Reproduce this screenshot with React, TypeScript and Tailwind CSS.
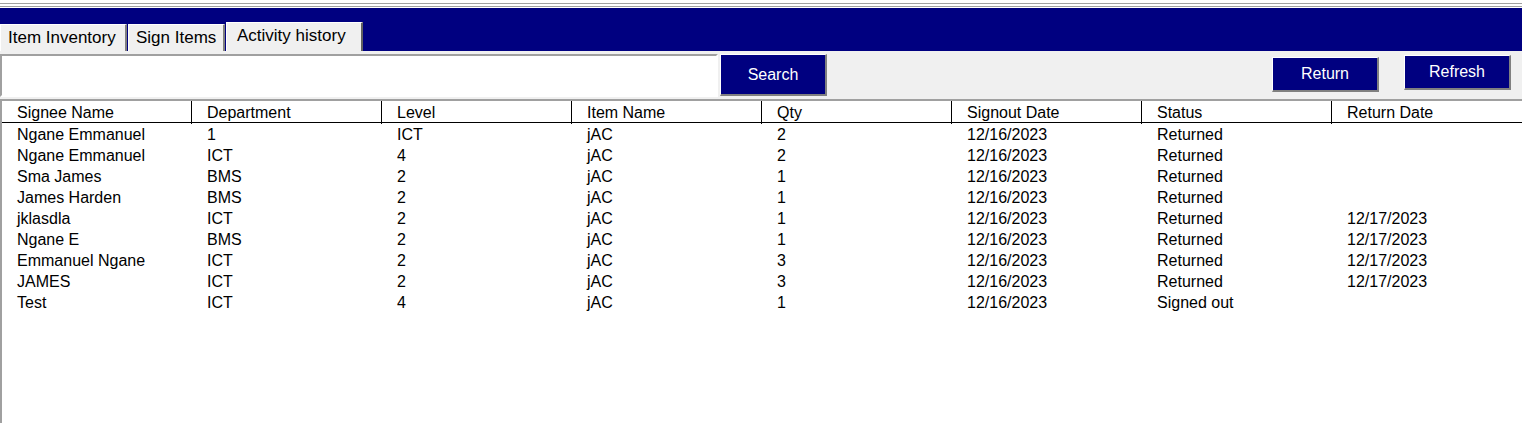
const columns = ['Signee Name', 'Department', 'Level', 'Item Name', 'Qty', 'Signout Date', 'Status', 'Return Date'];

const rows: string[][] = [
  ['Ngane Emmanuel', '1', 'ICT', 'jAC', '2', '12/16/2023', 'Returned', ''],
  ['Ngane Emmanuel', 'ICT', '4', 'jAC', '2', '12/16/2023', 'Returned', ''],
  ['Sma James', 'BMS', '2', 'jAC', '1', '12/16/2023', 'Returned', ''],
  ['James Harden', 'BMS', '2', 'jAC', '1', '12/16/2023', 'Returned', ''],
  ['jklasdla', 'ICT', '2', 'jAC', '1', '12/16/2023', 'Returned', '12/17/2023'],
  ['Ngane E', 'BMS', '2', 'jAC', '1', '12/16/2023', 'Returned', '12/17/2023'],
  ['Emmanuel Ngane', 'ICT', '2', 'jAC', '3', '12/16/2023', 'Returned', '12/17/2023'],
  ['JAMES', 'ICT', '2', 'jAC', '3', '12/16/2023', 'Returned', '12/17/2023'],
  ['Test', 'ICT', '4', 'jAC', '1', '12/16/2023', 'Signed out', ''],
];

function NavyButton({ label, className }: { label: string; className: string }) {
  return (
    <button
      className={`bg-[#000080] text-white text-[16px] border border-t-white border-l-white border-r-2 border-b-2 border-r-[#808080] border-b-[#808080] ${className}`}
    >
      {label}
    </button>
  );
}

export default function App() {
  return (
    <div className="w-[1522px] h-[423px] bg-white overflow-hidden flex flex-col text-black" style={{ fontFamily: '"Liberation Sans", Arial, sans-serif' }}>
      {/* window chrome lines */}
      <div className="h-[8px] flex flex-col">
        <div className="h-[3px]" />
        <div className="h-px bg-[#a0a0a0]" />
        <div className="h-[2px]" />
        <div className="h-px bg-[#a0a0a0]" />
        <div className="h-px" />
      </div>

      {/* tab strip */}
      <div className="h-[43px] bg-[#000080] flex items-end">
        <div className="h-[27px] w-[127px] bg-[#f0f0f0] border-t border-l border-white border-r-2 border-r-[#808080] pl-[7px] pt-[3px] text-[17px] leading-[20px]">
          Item Inventory
        </div>
        <div className="h-[27px] w-[97px] ml-px bg-[#f0f0f0] border-t border-l border-white border-r-2 border-r-[#808080] pl-[7px] pt-[3px] text-[17px] leading-[20px]">
          Sign Items
        </div>
        <div className="h-[30px] w-[137px] ml-px bg-[#f0f0f0] border-t border-l border-white border-r-2 border-r-[#606060] pl-[10px] pt-[3px] text-[17px] leading-[20px] -mb-px">
          Activity history
        </div>
      </div>

      {/* toolbar */}
      <div className="h-[48px] bg-[#f0f0f0] flex items-start pt-[3px]">
        <div className="w-[718px] h-[43px] bg-white border-2 border-[#a0a0a0] border-b-white border-r-white" />
        <NavyButton label="Search" className="ml-[2px] w-[107px] h-[42px]" />
        <div className="flex-1" />
        <NavyButton label="Return" className="mt-[3px] w-[107px] h-[35px]" />
        <NavyButton label="Refresh" className="ml-[25px] mt-[1px] w-[107px] h-[35px]" />
        <div className="w-[11px]" />
      </div>

      {/* table */}
      <div className="flex-1 bg-white border-t-2 border-l-2 border-[#a0a0a0]">
        <div className="grid grid-cols-[repeat(8,190px)] h-[22px] border-b border-black text-[16px]">
          {columns.map((c, i) => (
            <div key={c} className={`pl-[15px] leading-[23px] ${i > 0 ? 'border-l border-black -ml-px' : ''}`}>
              {c}
            </div>
          ))}
        </div>
        <div className="pt-px">
          {rows.map((r, idx) => (
            <div key={idx} className="grid grid-cols-[repeat(8,190px)] h-[21px] text-[16px] leading-[21px]">
              {r.map((v, i) => (
                <div key={i} className="pl-[15px]">
                  {v}
                </div>
              ))}
            </div>
          ))}
        </div>
      </div>
    </div>
  );
}
